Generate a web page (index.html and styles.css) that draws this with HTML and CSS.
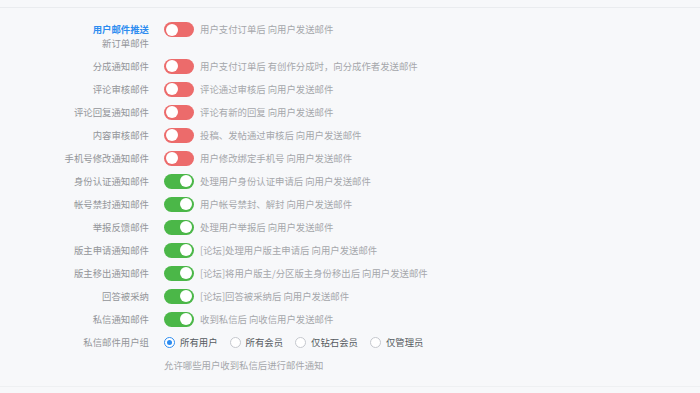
FILE: index.html
```html
<!DOCTYPE html>
<html lang="zh-CN">
<head>
    <meta charset="UTF-8">
    <title>邮件设置</title>
    <link rel="stylesheet" href="styles.css">
</head>
<body>
    <div class="panel">
        <div class="row">
            <div class="label">
                <div class="group-title">用户邮件推送</div>
                <div class="sub">新订单邮件</div>
            </div>
            <span class="switch off"></span>
            <span class="desc">用户支付订单后 向用户发送邮件</span>
        </div>
        <div class="row">
            <div class="label">分成通知邮件</div>
            <span class="switch off"></span>
            <span class="desc">用户支付订单后 有创作分成时，向分成作者发送邮件</span>
        </div>
        <div class="row">
            <div class="label">评论审核邮件</div>
            <span class="switch off"></span>
            <span class="desc">评论通过审核后 向用户发送邮件</span>
        </div>
        <div class="row">
            <div class="label">评论回复通知邮件</div>
            <span class="switch off"></span>
            <span class="desc">评论有新的回复 向用户发送邮件</span>
        </div>
        <div class="row">
            <div class="label">内容审核邮件</div>
            <span class="switch off"></span>
            <span class="desc">投稿、发帖通过审核后 向用户发送邮件</span>
        </div>
        <div class="row">
            <div class="label">手机号修改通知邮件</div>
            <span class="switch off"></span>
            <span class="desc">用户修改绑定手机号 向用户发送邮件</span>
        </div>
        <div class="row">
            <div class="label">身份认证通知邮件</div>
            <span class="switch on"></span>
            <span class="desc">处理用户身份认证申请后 向用户发送邮件</span>
        </div>
        <div class="row">
            <div class="label">帐号禁封通知邮件</div>
            <span class="switch on"></span>
            <span class="desc">用户帐号禁封、解封 向用户发送邮件</span>
        </div>
        <div class="row">
            <div class="label">举报反馈邮件</div>
            <span class="switch on"></span>
            <span class="desc">处理用户举报后 向用户发送邮件</span>
        </div>
        <div class="row">
            <div class="label">版主申请通知邮件</div>
            <span class="switch on"></span>
            <span class="desc">[论坛]处理用户版主申请后 向用户发送邮件</span>
        </div>
        <div class="row">
            <div class="label">版主移出通知邮件</div>
            <span class="switch on"></span>
            <span class="desc">[论坛]将用户版主/分区版主身份移出后 向用户发送邮件</span>
        </div>
        <div class="row">
            <div class="label">回答被采纳</div>
            <span class="switch on"></span>
            <span class="desc">[论坛]回答被采纳后 向用户发送邮件</span>
        </div>
        <div class="row">
            <div class="label">私信通知邮件</div>
            <span class="switch on"></span>
            <span class="desc">收到私信后 向收信用户发送邮件</span>
        </div>
        <div class="row">
            <div class="label">私信邮件用户组</div>
            <div class="radios">
                <label class="radio checked"><span class="dot"></span>所有用户</label>
                <label class="radio"><span class="dot"></span>所有会员</label>
                <label class="radio"><span class="dot"></span>仅钻石会员</label>
                <label class="radio"><span class="dot"></span>仅管理员</label>
            </div>
        </div>
        <div class="help">允许哪些用户收到私信后进行邮件通知</div>
    </div>
</body>
</html>
```

FILE: styles.css
```css
body {
    margin: 0;
    padding: 0;
    background-color: #f7f8fa;
    font-family: "Noto Sans CJK SC", "Liberation Sans", sans-serif;
    font-size: 9.4px;
    color: #909399;
}

.panel {
    margin-top: 7px;
    height: 380px;
    box-sizing: border-box;
    padding-top: 10px;
    border-top: 1px solid #eaecef;
    border-bottom: 1px solid #eef0f2;
}

.row {
    display: flex;
    align-items: flex-start;
    padding: 4px 0;
    line-height: 15px;
}

.label {
    width: 149px;
    margin-right: 15px;
    text-align: right;
    color: #939599;
    flex-shrink: 0;
}

.group-title {
    color: #2d8cf0;
    font-weight: bold;
}

.label .sub {
    line-height: 13.5px;
}

.switch {
    position: relative;
    width: 30px;
    height: 15px;
    border-radius: 8px;
    flex-shrink: 0;
    margin-right: 6px;
}

.switch::after {
    content: "";
    position: absolute;
    top: 1.5px;
    width: 12px;
    height: 12px;
    border-radius: 50%;
    background-color: #ffffff;
}

.switch.off {
    background-color: #ec6b6b;
}

.switch.off::after {
    left: 2px;
}

.switch.on {
    background-color: #4bb748;
}

.switch.on::after {
    right: 2px;
}

.desc {
    color: #a5a7ab;
}

.radios {
    display: flex;
    gap: 12px;
}

.radio {
    display: flex;
    align-items: center;
    color: #555a60;
}

.radio .dot {
    width: 11px;
    height: 11px;
    border: 1px solid #c5c8ce;
    border-radius: 50%;
    background-color: #ffffff;
    margin-right: 5px;
    box-sizing: border-box;
    position: relative;
}

.radio.checked .dot {
    border-color: #2d8cf0;
}

.radio.checked .dot::after {
    content: "";
    position: absolute;
    left: 2px;
    top: 2px;
    width: 5px;
    height: 5px;
    border-radius: 50%;
    background-color: #2d8cf0;
}

.help {
    margin: 4px 0 0 164px;
    line-height: 15px;
    color: #a5a7ab;
}
```
